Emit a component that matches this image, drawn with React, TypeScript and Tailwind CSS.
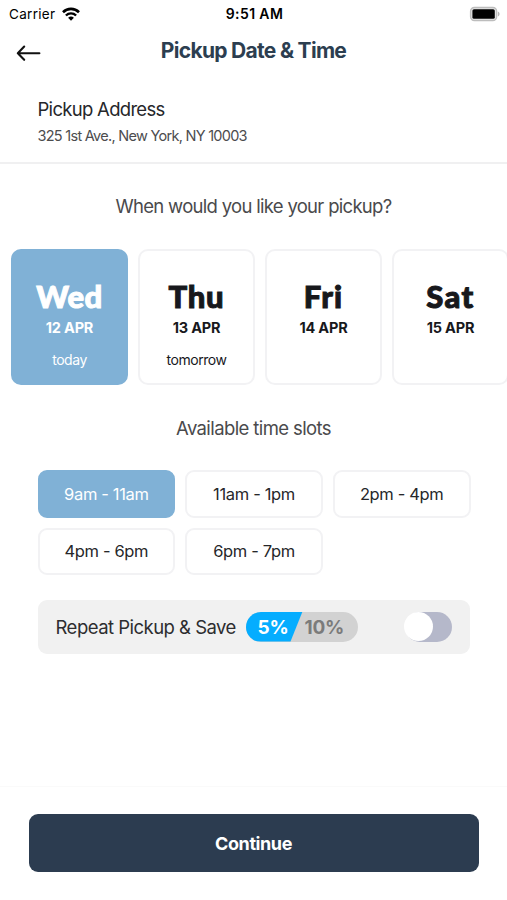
// Pickup scheduling screen with date cards, time slots and repeat discount
import React from "react";

const days = [
  { name: "Wed", date: "12 APR", note: "today", tracking: "tracking-[0.4px]" },
  { name: "Thu", date: "13 APR", note: "tomorrow", tracking: "tracking-[0.8px]" },
  { name: "Fri", date: "14 APR", note: "", tracking: "tracking-[1.2px]" },
  { name: "Sat", date: "15 APR", note: "", tracking: "tracking-[1.4px]" },
];

const slots = ["9am - 11am", "11am - 1pm", "2pm - 4pm", "4pm - 6pm", "6pm - 7pm"];

const StatusBar = () => (
  <div className="h-7 pl-[9px] pr-[7px] grid grid-cols-3 items-center text-black">
    <div className="flex items-center gap-[7px]">
      <span className="text-[13.5px] leading-7 tracking-[0.3px]">Carrier</span>
      <svg className="w-[18px] h-[14px] -mt-px" viewBox="0 0 18 14" fill="none" stroke="currentColor">
        <path strokeWidth="2.6" d="M1 5.2a11.4 11.4 0 0 1 16 0" />
        <path strokeWidth="2.4" d="M3.9 8.5a7.3 7.3 0 0 1 10.2 0" />
        <path fill="currentColor" stroke="none" d="M9 13.8l-2.9-3a4.2 4.2 0 0 1 5.8 0z" />
      </svg>
    </div>
    <span className="text-center text-[14px] leading-7 font-semibold tracking-[0.4px]">
      9:51 AM
    </span>
    <svg className="w-[31px] h-[16px] -mt-px justify-self-end" viewBox="0 0 31 16">
      <rect x="1.6" y="1.5" width="26" height="13" rx="3.8" fill="#e6e6e6" stroke="#bdbdbd" strokeWidth="1.4" />
      <rect x="3.4" y="3.2" width="22.4" height="9.6" rx="1.6" fill="#000" />
      <path d="M28.9 5.5v5c2.2-.8 2.2-4.2 0-5z" fill="#b5b5b5" />
    </svg>
  </div>
);

const Header = () => (
  <header className="h-[49px] px-4 grid grid-cols-[40px_1fr_40px]">
    <button aria-label="Go back" className="h-[50px] flex items-center">
      <svg
        className="w-[25px] h-[18px] text-[#111]"
        viewBox="0 0 25 18"
        fill="none"
        stroke="currentColor"
        strokeWidth="2.1"
        strokeLinecap="round"
        strokeLinejoin="round"
      >
        <path d="M8.2 2.6L1.8 9.2L8.2 15.8M1.8 9.2H23.4" />
      </svg>
    </button>
    <h1 className="text-center text-[21px] leading-[46px] font-bold tracking-[-0.7px] text-[#2c3e50]">
      Pickup Date &amp; Time
    </h1>
  </header>
);

const App = () => (
  <div className="w-[507px] h-[900px] overflow-hidden bg-white font-['Inter','Liberation_Sans',sans-serif] flex flex-col">
    <StatusBar />
    <Header />
    <section className="h-[87px] shrink-0 px-[37.5px] pt-[19px] border-b-2 border-[#f0f0f1]">
      <h2 className="text-[18.5px] leading-[26px] tracking-[-0.7px] text-[#26272a]">Pickup Address</h2>
      <p className="pt-px text-[14.5px] leading-[26px] tracking-[-0.72px] text-[#4c4c4e]">
        325 1st Ave., New York, NY 10003
      </p>
    </section>
    <main className="flex-1">
      <h3 className="pt-[27px] text-center text-[18.5px] leading-[30px] tracking-[-0.7px] text-[#4a4a4c]">
        When would you like your pickup?
      </h3>
      <div className="mt-[28px] pl-[11px] flex gap-[10px] overflow-hidden">
        {days.map((day, i) => (
          <button
            key={day.name}
            className={`w-[117px] h-[136px] shrink-0 rounded-[10px] border-2 pt-[28px] flex flex-col items-center ${
              i === 0
                ? "bg-[#80b1d6] border-[#80b1d6] text-white"
                : "bg-white border-[#f2f2f4] text-[#17181c]"
            }`}
          >
            <span
              className={`font-['Lato'] font-black text-[31px] leading-[34px] [-webkit-text-stroke:1px_currentColor] ${day.tracking}`}
            >
              {day.name}
            </span>
            <span className="pt-px text-[14.5px] leading-[28px] font-bold tracking-[-0.2px]">{day.date}</span>
            <span className="mt-[4px] text-[14px] leading-[28px] tracking-[-0.45px]">{day.note}</span>
          </button>
        ))}
      </div>
      <h3 className="mt-[28px] text-center text-[18.5px] leading-[30px] tracking-[-0.6px] text-[#4a4a4c]">
        Available time slots
      </h3>
      <div className="mt-[27px] pl-[37.5px] pr-[36.5px] grid grid-cols-3 gap-[10px]">
        {slots.map((slot, i) => (
          <button
            key={slot}
            className={`h-[47.5px] rounded-[9px] border-2 pt-px text-[16.5px] tracking-[-0.35px] ${
              i === 0
                ? "bg-[#80b1d6] border-[#80b1d6] text-white"
                : "bg-white border-[#f2f2f4] text-[#26272a]"
            }`}
          >
            {slot}
          </button>
        ))}
      </div>
      <div className="mt-[24.5px] mx-[37.5px] h-[54px] rounded-[9px] bg-[#f1f1f1] pl-[18px] pr-[18px] flex items-center">
        <span className="w-[190px] pt-[2px] whitespace-nowrap text-[18.5px] tracking-[-0.52px] text-[#2d2d2f]">
          Repeat Pickup &amp; Save
        </span>
        <div className="w-[112px] h-[30px] rounded-full overflow-hidden flex bg-[#d2d2d2] text-[19px] leading-[31px] font-bold tracking-[-0.2px]">
          <span className="w-[57px] pl-[12px] bg-[#05adff] text-white [clip-path:polygon(0_0,100%_0,79%_100%,0_100%)]">
            5%
          </span>
          <span className="pl-[2px] text-[#7b7b7b]">10%</span>
        </div>
        <div className="ml-auto w-[47px] h-[30px] rounded-full bg-[#b5b8ca] flex items-center">
          <div className="-ml-px w-[29px] h-[29px] shrink-0 rounded-full bg-white" />
        </div>
      </div>
    </main>
    <footer className="h-[114px] shrink-0 border-t border-[#fafafa] px-[28.5px] pt-[27px]">
      <button className="w-full h-[58px] rounded-[9px] bg-[#2c3c50] text-white text-[18px] font-bold tracking-[-0.4px]">
        Continue
      </button>
    </footer>
  </div>
);

export default App;
